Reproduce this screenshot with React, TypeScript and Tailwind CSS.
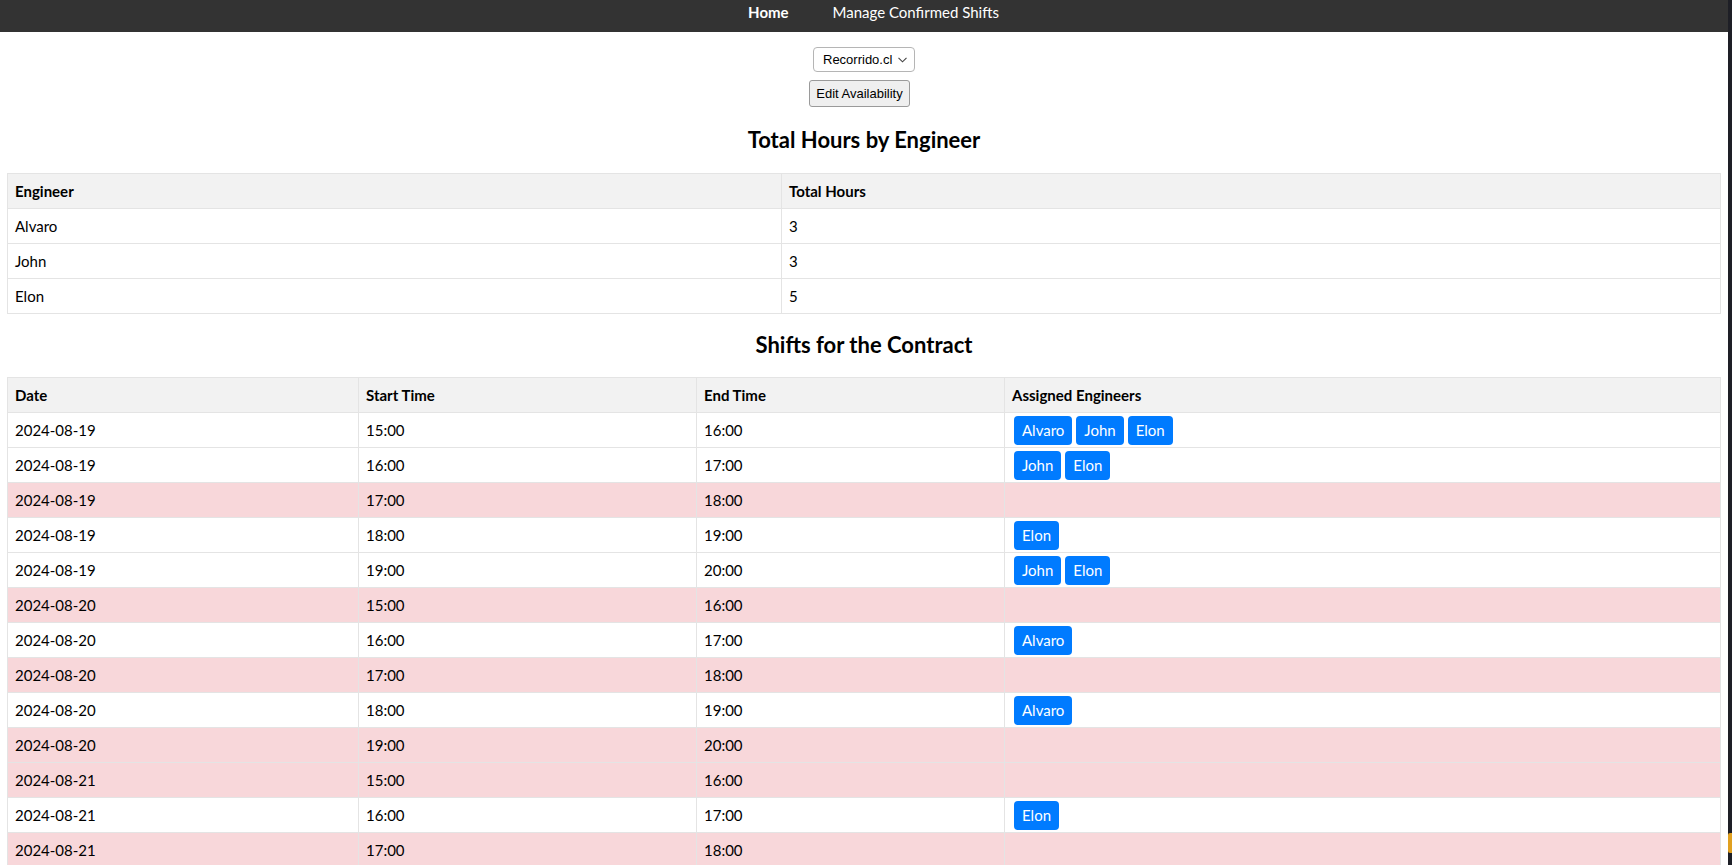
import React from 'react';

type Shift = { date: string; start: string; end: string; engineers: string[] };

const TOTALS = [
  { name: 'Alvaro', hours: 3 },
  { name: 'John', hours: 3 },
  { name: 'Elon', hours: 5 },
];

const SHIFTS: Shift[] = [
  { date: '2024-08-19', start: '15:00', end: '16:00', engineers: ['Alvaro', 'John', 'Elon'] },
  { date: '2024-08-19', start: '16:00', end: '17:00', engineers: ['John', 'Elon'] },
  { date: '2024-08-19', start: '17:00', end: '18:00', engineers: [] },
  { date: '2024-08-19', start: '18:00', end: '19:00', engineers: ['Elon'] },
  { date: '2024-08-19', start: '19:00', end: '20:00', engineers: ['John', 'Elon'] },
  { date: '2024-08-20', start: '15:00', end: '16:00', engineers: [] },
  { date: '2024-08-20', start: '16:00', end: '17:00', engineers: ['Alvaro'] },
  { date: '2024-08-20', start: '17:00', end: '18:00', engineers: [] },
  { date: '2024-08-20', start: '18:00', end: '19:00', engineers: ['Alvaro'] },
  { date: '2024-08-20', start: '19:00', end: '20:00', engineers: [] },
  { date: '2024-08-21', start: '15:00', end: '16:00', engineers: [] },
  { date: '2024-08-21', start: '16:00', end: '17:00', engineers: ['Elon'] },
  { date: '2024-08-21', start: '17:00', end: '18:00', engineers: [] },
];

const cell = 'border border-[#e4e4e4] pl-[7px] pr-[8px] h-[35px] py-0 text-left align-middle';

export default function App() {
  return (
    <div className="flex h-[865px] w-[1732px] overflow-hidden bg-[#1e1f26] font-['Lato',sans-serif] text-[15px] text-black">
      {/* page */}
      <div className="h-full w-[1728px] shrink-0 overflow-hidden bg-white">
        {/* Nav */}
        <nav className="flex h-[32px] items-start justify-center bg-[#333333] pl-[19px] pt-[2px] leading-[20px] text-white">
          <a className="px-[22px] font-bold">Home</a>
          <a className="px-[22px]">Manage Confirmed Shifts</a>
        </nav>

        <div className="flex flex-col items-center pt-[15px]">
          <div className="flex h-[25px] w-[102px] items-center justify-between rounded-[4px] border border-[#b5b5b5] bg-white pl-[9px] pr-[7px] font-['Liberation_Sans',sans-serif] text-[13px]">
            <span>Recorrido.cl</span>
            <svg width="9" height="6" viewBox="0 0 9 6" fill="none" stroke="#444" strokeWidth="1.1">
              <path d="M0.5 0.8 L4.5 4.8 L8.5 0.8" />
            </svg>
          </div>
          <button className="mt-[8px] mr-[9px] h-[27px] w-[101px] rounded-[3px] border border-[#9a9a9a] bg-[#efefef] font-['Liberation_Sans',sans-serif] text-[13px]">
            Edit Availability
          </button>
        </div>

        <div className="px-[7px]">
          <h2 className="mt-[19px] mb-[19px] text-center text-[22px] font-bold leading-[28px]">Total Hours by Engineer</h2>
          <table className="w-full border-collapse">
            <thead>
              <tr className="bg-[#f2f2f2]">
                <th className={`${cell} w-[774px] font-bold`}>Engineer</th>
                <th className={`${cell} font-bold`}>Total Hours</th>
              </tr>
            </thead>
            <tbody>
              {TOTALS.map((t) => (
                <tr key={t.name}>
                  <td className={cell}>{t.name}</td>
                  <td className={cell}>{t.hours}</td>
                </tr>
              ))}
            </tbody>
          </table>

          <h2 className="mt-[17px] mb-[18px] text-center text-[22px] font-bold leading-[28px]">Shifts for the Contract</h2>
          <table className="w-full border-collapse">
            <thead>
              <tr className="bg-[#f2f2f2]">
                <th className={`${cell} w-[351px] font-bold`}>Date</th>
                <th className={`${cell} w-[338px] font-bold`}>Start Time</th>
                <th className={`${cell} w-[308px] font-bold`}>End Time</th>
                <th className={`${cell} font-bold`}>Assigned Engineers</th>
              </tr>
            </thead>
            <tbody>
              {SHIFTS.map((s, i) => (
                <tr key={i} className={s.engineers.length === 0 ? 'bg-[#f8d7da]' : 'bg-white'}>
                  <td className={cell}>{s.date}</td>
                  <td className={cell}>{s.start}</td>
                  <td className={cell}>{s.end}</td>
                  <td className={`${cell} pl-[9px]`}>
                    <div className="flex gap-[4px]">
                      {s.engineers.map((e) => (
                        <span key={e} className="flex h-[29px] items-center rounded-[4px] bg-[#007bff] px-[8px] text-white">
                          {e}
                        </span>
                      ))}
                    </div>
                  </td>
                </tr>
              ))}
            </tbody>
          </table>
        </div>
      </div>
      {/* window edge */}
      <div className="flex w-[4px] flex-col">
        <div className="h-[833px]" />
        <div className="h-[20px] rounded-l-[2px] bg-[#e0a020]" />
      </div>
    </div>
  );
}
